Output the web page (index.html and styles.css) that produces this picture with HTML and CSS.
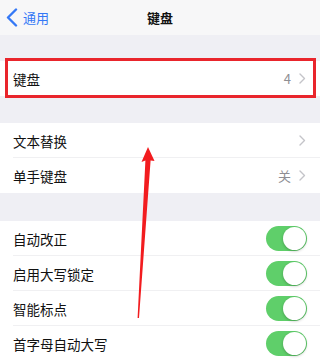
FILE: index.html
```html
<!DOCTYPE html>
<html lang="zh-CN">
<head>
<meta charset="utf-8">
<title>键盘</title>
<link rel="stylesheet" href="styles.css">
</head>
<body>
<div class="page">
  <header class="nav">
    <div class="back">
      <svg class="back-icon" width="12" height="19" viewBox="0 0 12 19"><polyline points="10,1.5 2,9.5 10,17.5" fill="none" stroke="#3478f6" stroke-width="2.4" stroke-linecap="round" stroke-linejoin="round"/></svg>
      <span>通用</span>
    </div>
    <div class="title">键盘</div>
  </header>

  <div class="spacer s1"></div>
  <section class="group">
    <div class="row">
      <span class="label">键盘</span>
      <span class="detail">4</span>
      <svg class="chev" width="7" height="11" viewBox="0 0 7 11"><polyline points="1,1 5.5,5.5 1,10" fill="none" stroke="#c4c4c9" stroke-width="1.4" stroke-linecap="round" stroke-linejoin="round"/></svg>
    </div>
  </section>

  <div class="spacer s2"></div>
  <section class="group">
    <div class="row sep">
      <span class="label">文本替换</span>
      <svg class="chev" width="7" height="11" viewBox="0 0 7 11"><polyline points="1,1 5.5,5.5 1,10" fill="none" stroke="#c4c4c9" stroke-width="1.4" stroke-linecap="round" stroke-linejoin="round"/></svg>
    </div>
    <div class="row">
      <span class="label">单手键盘</span>
      <span class="detail">关</span>
      <svg class="chev" width="7" height="11" viewBox="0 0 7 11"><polyline points="1,1 5.5,5.5 1,10" fill="none" stroke="#c4c4c9" stroke-width="1.4" stroke-linecap="round" stroke-linejoin="round"/></svg>
    </div>
  </section>

  <div class="spacer s3"></div>
  <section class="group">
    <div class="row sep"><span class="label">自动改正</span><span class="toggle"><span class="knob"></span></span></div>
    <div class="row sep"><span class="label">启用大写锁定</span><span class="toggle"><span class="knob"></span></span></div>
    <div class="row sep"><span class="label">智能标点</span><span class="toggle"><span class="knob"></span></span></div>
    <div class="row"><span class="label">首字母自动大写</span><span class="toggle"><span class="knob"></span></span></div>
  </section>

  <div class="highlight"></div>
  <svg class="arrow" width="320" height="360" viewBox="0 0 320 360">
    <polygon points="148,147 154.5,161 150.6,160.5 139,318 137.6,318 145.4,160.5 141.5,162" fill="#f21c1f"/>
  </svg>
</div>
</body>
</html>
```

FILE: styles.css
```css
* { box-sizing: border-box; }
html, body { margin: 0; padding: 0; }
body {
  background: #efeff4;
  font-family: "Noto Sans CJK SC", "Noto Sans", sans-serif;
  color: #111;
  width: 320px;
  height: 360px;
  overflow: hidden;
}
.page { position: relative; width: 320px; height: 360px; }

.nav {
  height: 35px;
  background: #f7f7f8;
  display: flex;
  align-items: center;
  justify-content: center;
  position: relative;
}
.back {
  position: absolute;
  left: 6px;
  top: 0;
  height: 35px;
  display: flex;
  align-items: center;
  gap: 5px;
  color: #3478f6;
  font-size: 13px;
}
.title { font-size: 13px; font-weight: 700; }

.s1 { height: 26px; }
.s2 { height: 27px; }
.s3 { height: 28px; }

.group { background: #fff; }
.row {
  height: 35px;
  display: flex;
  align-items: center;
  padding: 0 13px;
  position: relative;
}
.row.sep::after {
  content: "";
  position: absolute;
  left: 13px;
  right: 0;
  bottom: 0;
  height: 1px;
  background: #f0f0f2;
}
.label { font-size: 13.5px; flex: 1; }
.detail { font-size: 13px; color: #8e8e93; margin-right: 8px; }
.chev { display: block; margin-right: 1px; }

.toggle {
  width: 41px;
  height: 25px;
  border-radius: 13px;
  background: #5fcf6a;
  position: relative;
}
.knob {
  position: absolute;
  right: 1px;
  top: 1px;
  width: 23px;
  height: 23px;
  border-radius: 50%;
  background: #fff;
  box-shadow: 0 1px 3px rgba(0,0,0,0.25);
}

.highlight {
  position: absolute;
  left: 5px;
  top: 58px;
  width: 311px;
  height: 40px;
  border: 3px solid #e9252c;
}
.arrow { position: absolute; left: 0; top: 0; }
```
